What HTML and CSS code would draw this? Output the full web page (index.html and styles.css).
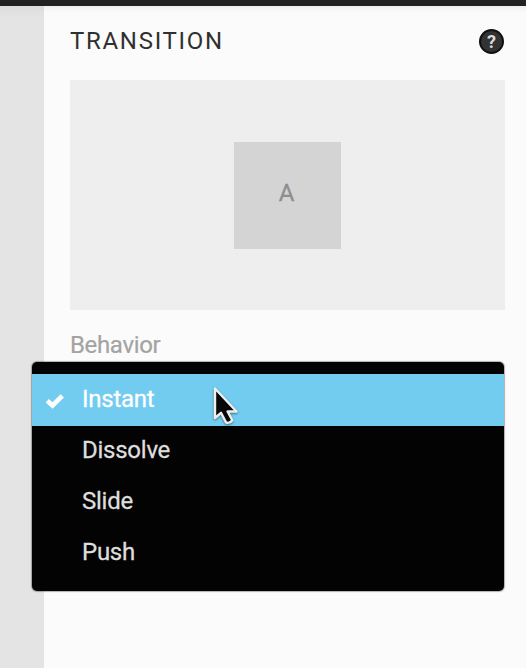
FILE: index.html
```html
<!DOCTYPE html>
<html lang="en">
<head>
<meta charset="utf-8">
<title>Transition</title>
<link rel="stylesheet" href="styles.css">
</head>
<body>
<div class="topbar"></div>
<div class="workspace">
  <div class="canvas-edge"></div>
  <main class="panel">
    <header class="panel-header">
      <h1 class="title">TRANSITION</h1>
      <span class="help">?</span>
    </header>
    <div class="preview"><div class="tile">A</div></div>
    <section class="field">
      <div class="label">Behavior</div>
      <ul class="menu">
        <li class="item selected">
          <svg class="check" viewBox="0 0 20 16"><path d="M2.3 7.7 7.5 12.5 17.3 2.8"/></svg>
          Instant
        </li>
        <li class="item">Dissolve</li>
        <li class="item">Slide</li>
        <li class="item">Push</li>
      </ul>
    </section>
  </main>
</div>
<svg class="cursor" viewBox="0 0 26 40"><path d="M2 2.5v29.5l6-5.2 5 9.6q3.600 1.600 6.300-2.200l-4.700-8.700H23.500z"/></svg>
</body>
</html>
```
FILE: styles.css
```css
* { box-sizing: border-box; }
body {
  margin: 0;
  height: 668px;
  overflow: hidden;
  display: flex;
  flex-direction: column;
  background: #fbfbfb;
  font-family: Roboto, sans-serif;
  font-size: 24px;
  line-height: 28px;
}
.topbar { height: 6px; flex: none; background: #232223; }
.workspace { flex: 1; display: flex; box-shadow: inset 0 5px 6px -4px #e6e6e6; }
.canvas-edge { width: 44px; flex: none; background: linear-gradient(#dcdcdc, #e4e4e4 12px); }
.panel { flex: 1; padding: 20px 21px 0 26px; }
.panel-header { display: flex; justify-content: space-between; height: 54px; }
.title { margin: 1px 0 0; font-size: 24px; font-weight: 400; line-height: 28px; letter-spacing: 1.7px; color: #303030; }
.help {
  width: 25px;
  height: 25px;
  margin: 3px 1px 0 0;
  border: 2px solid #101010;
  border-radius: 50%;
  background: #333;
  color: #ddd;
  font-size: 18px;
  font-weight: 700;
  line-height: 22px;
  text-align: center;
}
.preview { height: 230px; display: flex; align-items: center; justify-content: center; background: #eee; }
.tile {
  width: 107px;
  height: 107px;
  padding: 0 2px 4px 0;
  display: flex;
  align-items: center;
  justify-content: center;
  background: #d4d4d4;
  color: #8e8e8e;
  -webkit-text-stroke: .3px;
}
.label { height: 52px; padding-top: 21px; color: #a3a3a3; letter-spacing: -.35px; -webkit-text-stroke: .2px; }
.menu {
  list-style: none;
  height: 229px;
  margin: 0 1px 0 -38px;
  padding: 12px 0 0;
  border-radius: 5px;
  background: #030303;
  box-shadow: 0 0 1px 1px rgba(0, 0, 0, .3);
  color: #dedede;
  letter-spacing: -.25px;
  -webkit-text-stroke: .3px;
}
.item { position: relative; height: 51px; padding: 10px 0 0 50px; }
.selected { height: 52px; padding-top: 11px; background: #72ccef; color: #fff; }
.check { position: absolute; left: 13px; top: 19px; width: 20px; height: 16px; fill: none; stroke: #fff; stroke-width: 4.6; }
.cursor {
  position: absolute;
  left: 213px;
  top: 386px;
  width: 26px;
  height: 40px;
  overflow: visible;
  fill: #080808;
  stroke: #eee;
  stroke-width: 2.4;
  stroke-linejoin: round;
  filter: drop-shadow(0 1px 1px rgba(0, 0, 0, .45));
}
```
